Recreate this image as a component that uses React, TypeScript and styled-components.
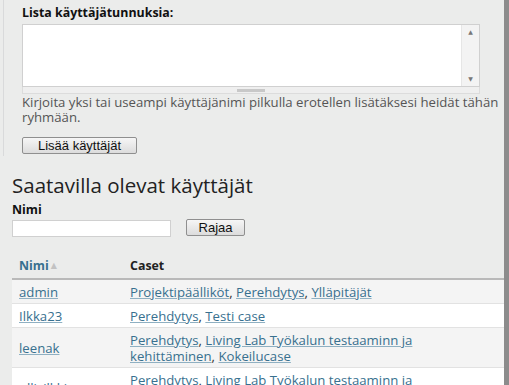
import { FunctionComponent as FC } from 'react';
import styled, { createGlobalStyle } from 'styled-components';

const GlobalStyle = createGlobalStyle`
  html, body {
    margin: 0;
    padding: 0;
    background: #ebeceb;
    overflow: hidden;
  }
  body {
    font-family: 'Open Sans', 'DejaVu Sans', sans-serif;
    font-size: 13.2px;
    color: #333;
  }
`;

const Page = styled.div`
  width: 504px;
  height: 385px;
  border-right: 5px solid #8c8c8c;
  background: #ebeceb;
  overflow: hidden;
`;

const AddSection = styled.div`
  margin-left: 3px;
  border-left: 1px solid #d9dadb;
  padding: 5px 0 0 18px;
  height: 156px;
  box-sizing: border-box;
`;

const FieldLabel = styled.label`
  display: block;
  font-weight: 700;
  font-size: 12.4px;
  line-height: 16px;
  color: #111;
  margin-bottom: 3px;
`;

const AreaWrap = styled.div`
  display: flex;
  width: 458px;
  height: 63px;
  box-sizing: border-box;
  border: 1px solid #d0d0d0;
  background: #fff;
`;

const Area = styled.textarea`
  flex: 1;
  margin: 0;
  border: none;
  background: #fff;
  resize: none;
  outline: none;
`;

const ScrollTrack = styled.div`
  width: 17px;
  background: #f3f3f3;
  border-left: 1px solid #e6e6e6;
  display: flex;
  flex-direction: column;
  justify-content: space-between;
  align-items: center;
  padding: 3px 0;
  color: #777;
  font-size: 6px;
  line-height: 8px;
`;

const Grippie = styled.div`
  width: 458px;
  height: 7px;
  box-sizing: border-box;
  border: 1px solid #dcdcdc;
  border-top: none;
  background: #efefef;
  display: flex;
  justify-content: center;
  align-items: center;
  &::after {
    content: '';
    width: 28px;
    height: 3px;
    background: #c8c8c8;
  }
`;

const Help = styled.div`
  margin-top: 1px;
  width: 478px;
  line-height: 15px;
  color: #555;
`;

const Button = styled.button`
  font-family: 'Liberation Sans', Arial, sans-serif;
  font-size: 13px;
  color: #111;
  padding: 0 10px;
  height: 17px;
  line-height: 15px;
  border: 1px solid #8f8f8f;
  border-radius: 2px;
  background: linear-gradient(#f6f6f6, #dcdcdc);
`;

const AddButton = styled(Button)`
  display: block;
  margin-top: 12px;
  width: 115px;
`;

const ListSection = styled.div`
  padding: 16px 0 0 12px;
`;

const Heading = styled.h2`
  margin: 0;
  font-size: 20.5px;
  font-weight: 400;
  line-height: 26px;
  color: #222;
`;

const FilterLabel = styled(FieldLabel)`
  margin: 4px 0 2px;
`;

const FilterRow = styled.div`
  display: flex;
  align-items: flex-start;
  gap: 15px;
`;

const TextInput = styled.input`
  box-sizing: border-box;
  width: 159px;
  height: 17px;
  margin: 0;
  border: 1px solid #d0d0d0;
  background: #fff;
`;

const FilterButton = styled(Button)`
  margin-top: -1px;
  width: 59px;
`;

const Table = styled.table`
  margin: 20px 0 0 12px;
  width: 492px;
  border-collapse: collapse;
`;

const Th = styled.th`
  text-align: left;
  font-weight: 700;
  font-size: 12.4px;
  line-height: 16px;
  color: #222;
  padding: 0 0 4px 7px;
  border-bottom: 2px solid #b9b9b9;
  &:first-child {
    width: 111px;
  }
  &:last-child {
    padding-left: 0;
  }
`;

const HeadLink = styled.a`
  color: #38708f;
  text-decoration: none;
`;

const SortArrow = styled.span`
  color: #c2c2c2;
  font-size: 8px;
  margin-left: 2px;
  vertical-align: 2px;
`;

const Tr = styled.tr<{ $odd: boolean }>`
  background: ${p => (p.$odd ? '#f4f4f4' : '#fff')};
  border-bottom: 1px solid #e2e2e2;
`;

const Td = styled.td`
  padding: 4px 7px 3px;
  line-height: 16px;
  vertical-align: middle;
  &:last-child {
    padding-left: 0;
  }
`;

const Link = styled.a`
  color: #38708f;
  text-decoration: underline;
  text-decoration-color: #8fb0c2;
`;

const users = [
  { name: 'admin', cases: ['Projektipäälliköt', 'Perehdytys', 'Ylläpitäjät'] },
  { name: 'Ilkka23', cases: ['Perehdytys', 'Testi case'] },
  { name: 'leenak', cases: ['Perehdytys', 'Living Lab Työkalun testaaminn ja kehittäminen', 'Kokeilucase'] },
  { name: 'ollisilkki', cases: ['Perehdytys', 'Living Lab Työkalun testaaminn ja kehittäminen', 'Kokeilucase'] },
];

const App: FC = () => (
  <Page>
    <GlobalStyle />
    <AddSection>
      <FieldLabel>Lista käyttäjätunnuksia:</FieldLabel>
      <AreaWrap>
        <Area />
        <ScrollTrack>
          <span>▲</span>
          <span>▼</span>
        </ScrollTrack>
      </AreaWrap>
      <Grippie />
      <Help>Kirjoita yksi tai useampi käyttäjänimi pilkulla erotellen lisätäksesi heidät tähän ryhmään.</Help>
      <AddButton>Lisää käyttäjät</AddButton>
    </AddSection>
    <ListSection>
      <Heading>Saatavilla olevat käyttäjät</Heading>
      <FilterLabel>Nimi</FilterLabel>
      <FilterRow>
        <TextInput />
        <FilterButton>Rajaa</FilterButton>
      </FilterRow>
    </ListSection>
    <Table>
      <thead>
        <tr>
          <Th>
            <HeadLink href="#">Nimi</HeadLink>
            <SortArrow>▲</SortArrow>
          </Th>
          <Th>Caset</Th>
        </tr>
      </thead>
      <tbody>
        {users.map((u, i) => (
          <Tr key={u.name} $odd={i % 2 === 0}>
            <Td>
              <Link href="#">{u.name}</Link>
            </Td>
            <Td>
              {u.cases.map((c, j) => (
                <span key={c}>
                  <Link href="#">{c}</Link>
                  {j < u.cases.length - 1 ? ', ' : ''}
                </span>
              ))}
            </Td>
          </Tr>
        ))}
      </tbody>
    </Table>
  </Page>
);

export default App;
